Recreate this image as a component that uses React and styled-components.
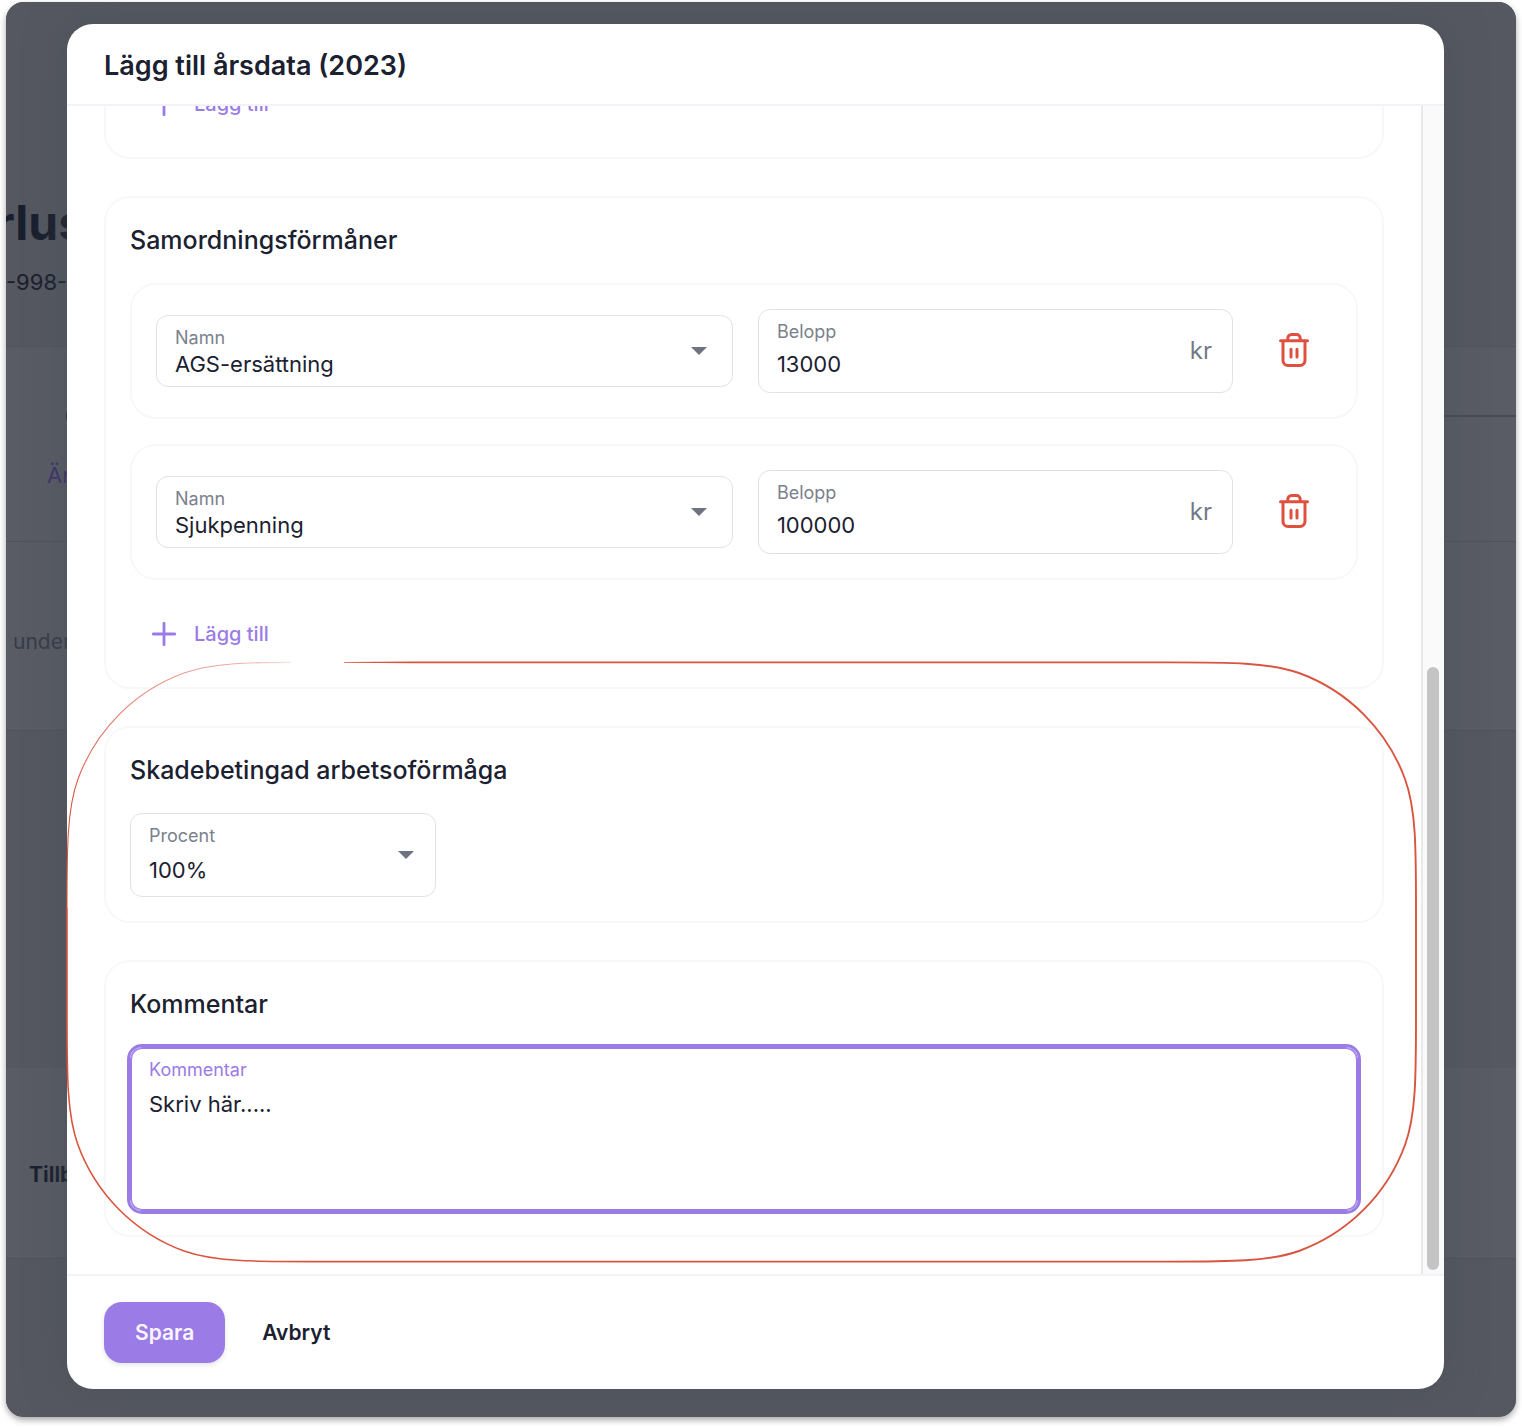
import React from "react";
import styled, { createGlobalStyle } from "styled-components";

const GlobalStyle = createGlobalStyle`
  * {
    box-sizing: border-box;
  }
  body {
    margin: 0;
    background: #ffffff;
    color: #1b2130;
    font-family: Inter, "Liberation Sans", sans-serif;
  }
  button,
  input,
  select,
  textarea {
    font-family: inherit;
    color: inherit;
  }
`;

const Shell = styled.div`
  display: flow-root;
`;

const Frame = styled.div`
  display: grid;
  grid-template: minmax(0, 1fr) / minmax(0, 1fr);
  height: calc(100vh - 13px);
  min-height: 900px;
  margin: 2px 6px 11px;
  border-radius: 18px;
  overflow: hidden;
  background: #555860;
  box-shadow: 0 3px 6px rgba(0, 0, 0, 0.35);
`;

/* Dimmed page behind the dialog */
const Page = styled.div`
  grid-area: 1 / 1;
  display: flex;
  flex-direction: column;
  overflow: hidden;
  color: #1a1f2e;
`;

const Band = styled.section`
  flex: none;
  height: ${props => props.$height}px;
  padding: ${props => props.$pad || "0"};
  background: ${props => (props.$panel ? "#595c64" : "#555860")};
  border-top: 1px solid ${props => (props.$line ? "#50535c" : "transparent")};
`;

const PageTitle = styled.h1`
  margin: 0 0 14px -11px;
  font-size: 48px;
  line-height: 60px;
  font-weight: 700;
`;

const PageText = styled.p`
  margin: 0;
  padding-left: ${props => props.$left || 0}px;
  font-size: ${props => props.$size || 22}px;
  line-height: 30px;
  font-weight: ${props => (props.$bold ? 700 : 400)};
  color: ${props => props.$color || "inherit"};
`;

const Stepper = styled.div`
  display: flex;
  align-items: center;
  height: 24px;
  margin: 0 0 32px 60px;
`;

const StepDot = styled.span`
  width: 24px;
  height: 24px;
  border-radius: 50%;
  background: #352a6b;
`;

const StepLine = styled.span`
  flex: 1;
  height: 2px;
  background: #484b55;
`;

const Modal = styled.div`
  grid-area: 1 / 1;
  display: flex;
  flex-direction: column;
  margin: 22px 72px 28px 61px;
  border-radius: 26px;
  background: #ffffff;
  box-shadow: 0 0 40px rgba(70, 78, 88, 0.5);
  z-index: 1;
`;

const Header = styled.header`
  flex: none;
  padding: 24px 37px 20px;
  border-bottom: 2px solid #f3f3f7;
`;

const ModalTitle = styled.h2`
  margin: 0;
  font-size: 27px;
  line-height: 36px;
  font-weight: 600;
`;

const Body = styled.div`
  position: relative;
  display: flex;
  flex: 1;
  min-height: 0;
`;

/* Anchored to the last section, so the first one runs under the header */
const Content = styled.div`
  flex: 1;
  min-width: 0;
  display: flex;
  flex-direction: column;
  justify-content: flex-end;
  gap: 37px;
  padding: 0 37px 37px;
  overflow: hidden;
`;

const Track = styled.div`
  display: flex;
  flex-direction: column;
  justify-content: flex-end;
  width: 23px;
  padding: 4px;
  border-left: 2px solid #e9e9e9;
  background: #fafafa;
`;

const Thumb = styled.div`
  height: 52%;
  width: 12px;
  border-radius: 6px;
  background: #c4c4c4;
`;

const Card = styled.section`
  flex: none;
  padding: 24px;
  border: 2px solid #f8f8fb;
  border-radius: 26px;
`;

const CardTitle = styled.h3`
  margin: 0 0 25px;
  font-size: 25px;
  line-height: 36px;
  font-weight: 500;
`;

const Row = styled.div`
  display: grid;
  grid-template-columns: minmax(0, 17fr) minmax(0, 14fr) 74px;
  align-items: center;
  gap: 25px;
  margin-bottom: 25px;
  padding: 24px;
  border: 2px solid #f8f8fb;
  border-radius: 26px;
`;

const Field = styled.div`
  display: flex;
  align-items: center;
  width: ${props => props.$width || "auto"};
  max-width: 100%;
  height: ${props => props.$height || 84}px;
  padding: 0 ${props => props.$right || 20}px 0 18px;
  border: 1px solid ${props => (props.$active ? "#9b7be6" : "#e1e2e8")};
  border-radius: 12px;
  box-shadow: ${props =>
    props.$active ? "0 0 0 3px #9b7be6, inset 0 0 0 1px #9b7be6" : "none"};
`;

const Stack = styled.div`
  flex: 1;
  align-self: stretch;
  min-width: 0;
  display: flex;
  flex-direction: column;
  gap: ${props => props.$gap}px;
  padding-top: 11px;
`;

const Label = styled.label`
  font-size: 18px;
  line-height: 22px;
  color: ${props => (props.$active ? "#9b7be6" : "#7b818c")};
`;

const control = `
  display: block;
  width: 100%;
  height: 30px;
  margin: 0;
  padding: 0;
  border: 0;
  outline: 0;
  background: transparent;
  appearance: none;
  font-size: 22px;
  line-height: 30px;
`;

const Select = styled.select`
  ${control}
`;

const Input = styled.input`
  ${control}
`;

const TextArea = styled.textarea`
  ${control}
  height: 90px;
  resize: none;
`;

const Unit = styled.span`
  font-size: 24px;
  line-height: 30px;
  color: #727985;
`;

const Button = styled.button`
  display: inline-flex;
  align-items: center;
  justify-content: center;
  gap: 18px;
  border: 0;
  background: transparent;
  cursor: pointer;
`;

const IconButton = styled(Button)`
  height: 60px;
  padding: 0 2px 2px 0;
`;

const AddButton = styled(Button)`
  height: 58px;
  padding: 0 22px;
  color: #9b7be6;
  font-size: 20px;
  font-weight: 500;
`;

const Footer = styled.footer`
  flex: none;
  display: flex;
  gap: 6px;
  padding: 26px 37px;
  border-top: 2px solid #f3f3f7;
`;

const FooterButton = styled(Button)`
  height: 61px;
  padding: 0 31px;
  border-radius: 18px;
  font-size: 21px;
  font-weight: 600;
`;

const SaveButton = styled(FooterButton)`
  background: #9b7be6;
  color: #f8f5ff;
  box-shadow: 0 2px 5px rgba(27, 33, 48, 0.12);
`;

const Marker = styled.svg`
  position: absolute;
  left: -1px;
  bottom: 11px;
  width: calc(100% - 26px);
  height: 602px;
  pointer-events: none;
`;

const ArrowIcon = () => (
  <svg width="16" height="8" viewBox="0 0 16 8" aria-hidden="true">
    <path d="M0 0h16L8 8z" fill="#6d7480" />
  </svg>
);

const PlusIcon = () => (
  <svg width="24" height="24" viewBox="0 0 24 24" aria-hidden="true">
    <path
      d="M12 1.3v21.4M1.3 12h21.4"
      stroke="currentColor"
      strokeWidth="2.8"
      strokeLinecap="round"
    />
  </svg>
);

const TrashIcon = () => (
  <svg width="30" height="34" viewBox="0 0 30 34" fill="none" aria-hidden="true">
    <g stroke="#dd513e" strokeWidth="3">
      <path d="M1.5 7.8h27" strokeLinecap="round" />
      <path d="M8.8 7V5.2c0-2 1.6-3.7 3.7-3.7h5c2 0 3.7 1.6 3.7 3.7V7" />
      <path d="M4 8v19.5a5 5 0 0 0 5 5h12a5 5 0 0 0 5-5V8" />
      <path d="M12 16.2v7.8M18 16.2v7.8" strokeLinecap="round" />
    </g>
  </svg>
);

const Highlight = () => (
  <Marker viewBox="0 0 1351 602" preserveAspectRatio="none" fill="none" aria-hidden="true">
    <defs>
      <linearGradient id="fade" gradientUnits="userSpaceOnUse" x1="225" y1="0" x2="10" y2="160">
        <stop offset="0" stopColor="#d9553f" stopOpacity="0.15" />
        <stop offset="0.15" stopColor="#d9553f" stopOpacity="0.45" />
        <stop offset="1" stopColor="#d9553f" />
      </linearGradient>
    </defs>
    <path d="M278 1V1.8L345 2.35V0.45z" fill="#d9553f" />
    <path
      d="M345 1.4H1104C1164 1.4 1203 1.4 1233 12A178 178 0 0 1 1339 118C1350 148 1350 187 1350 247V355C1350 415 1350 454 1339 484A178 178 0 0 1 1233 590C1203 600.6 1164 600.6 1104 600.6H400"
      stroke="#d9553f"
      strokeWidth="1.9"
    />
    <path
      d="M400 600.6H247C187 600.6 148 600.6 118 590A178 178 0 0 1 12 484C1 454 1 415 1 355V247"
      stroke="#d9553f"
      strokeWidth="1.6"
    />
    <path
      d="M1 247C1 187 1 148 12 118A178 178 0 0 1 118 12C148 1.4 187 1.4 225 1.4"
      stroke="url(#fade)"
      strokeWidth="1.1"
    />
  </Marker>
);

const AddRow = () => (
  <AddButton type="button">
    <PlusIcon />
    Lägg till
  </AddButton>
);

const Benefit = ({ id, name, amount }) => (
  <Row>
    <Field $height={72} $right={25}>
      <Stack $gap={0}>
        <Label htmlFor={`name-${id}`}>Namn</Label>
        <Select id={`name-${id}`} defaultValue={name}>
          <option>{name}</option>
        </Select>
      </Stack>
      <ArrowIcon />
    </Field>
    <Field>
      <Stack $gap={6}>
        <Label htmlFor={`amount-${id}`}>Belopp</Label>
        <Input id={`amount-${id}`} type="text" defaultValue={amount} />
      </Stack>
      <Unit>kr</Unit>
    </Field>
    <IconButton type="button" aria-label="Ta bort">
      <TrashIcon />
    </IconButton>
  </Row>
);

const benefits = [
  { id: 1, name: "AGS-ersättning", amount: "13000" },
  { id: 2, name: "Sjukpenning", amount: "100000" }
];

const App = () => (
  <Shell>
    <GlobalStyle />
    <Frame>
      <Page aria-hidden="true">
        <Band $height={344} $pad="190px 0 0">
          <PageTitle>rlus</PageTitle>
          <PageText>-998-</PageText>
        </Band>
        <Band $height={195} $pad="57px 0 0" $panel $line>
          <Stepper>
            <StepDot />
            <StepLine />
          </Stepper>
          <PageText $color="#40326f" $left={41}>
            Än
          </PageText>
        </Band>
        <Band $height={189} $pad="85px 0 0" $panel $line>
          <PageText $color="#373c49" $left={7} $size={21}>
            under
          </PageText>
        </Band>
        <Band $height={338} $line />
        <Band $height={190} $pad="91px 0 0" $panel>
          <PageText $bold $left={23} $size={21}>
            Tillb
          </PageText>
        </Band>
        <Band $height={158} $line />
      </Page>

      <Modal role="dialog" aria-labelledby="dialog-title">
        <Header>
          <ModalTitle id="dialog-title">Lägg till årsdata (2023)</ModalTitle>
        </Header>
        <Body>
          <Content>
            <Card>
              <AddRow />
            </Card>
            <Card>
              <CardTitle>Samordningsförmåner</CardTitle>
              {benefits.map(benefit => (
                <Benefit key={benefit.id} {...benefit} />
              ))}
              <AddRow />
            </Card>
            <Card>
              <CardTitle>Skadebetingad arbetsoförmåga</CardTitle>
              <Field $width="306px" $right={21}>
                <Stack $gap={8}>
                  <Label htmlFor="percent">Procent</Label>
                  <Select id="percent" defaultValue="100%">
                    <option>100%</option>
                  </Select>
                </Stack>
                <ArrowIcon />
              </Field>
            </Card>
            <Card>
              <CardTitle>Kommentar</CardTitle>
              <Field $height={164} $active>
                <Stack $gap={8}>
                  <Label htmlFor="comment" $active>
                    Kommentar
                  </Label>
                  <TextArea id="comment" defaultValue="Skriv här....." />
                </Stack>
              </Field>
            </Card>
          </Content>
          <Track>
            <Thumb />
          </Track>
          <Highlight />
        </Body>
        <Footer>
          <SaveButton type="button">Spara</SaveButton>
          <FooterButton type="button">Avbryt</FooterButton>
        </Footer>
      </Modal>
    </Frame>
  </Shell>
);

export default App;
